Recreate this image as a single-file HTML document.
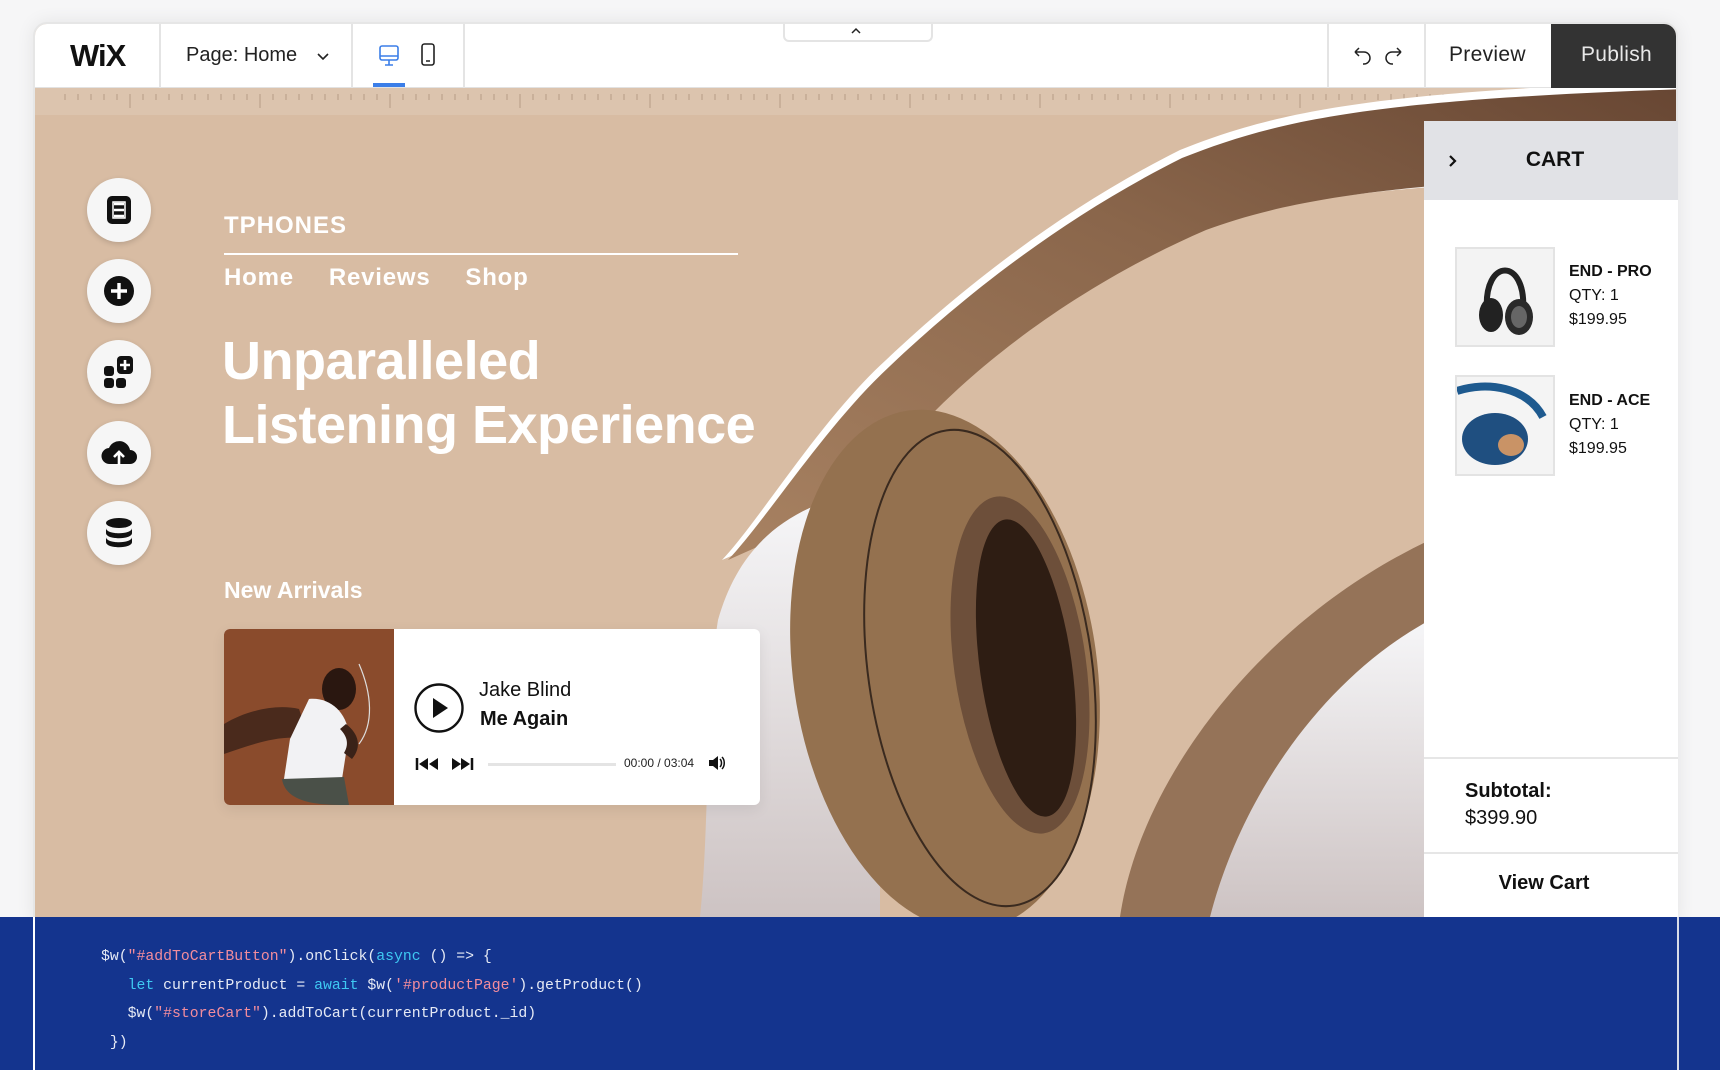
<!DOCTYPE html>
<html><head><meta charset="utf-8"><style>
*{margin:0;padding:0;box-sizing:border-box}
body{width:1720px;height:1070px;overflow:hidden;background:#f6f6f7;font-family:"Liberation Sans",sans-serif;position:relative}
.a{position:absolute}
.frame{left:33px;top:22px;width:1645px;height:900px;background:#d8bca3;border-radius:14px 14px 0 0;overflow:hidden;box-shadow:0 0 18px rgba(0,0,0,.08);border:2px solid #e6e6e6}
.top{left:0;top:0;width:1645px;height:64px;background:#fff;border-bottom:1px solid #e2e2e2}
.sep{top:0;width:2px;height:64px;background:#e4e4e4}
.circ{width:64px;height:64px;border-radius:50%;background:#f6f6f6;box-shadow:0 2px 6px rgba(0,0,0,.15);display:flex;align-items:center;justify-content:center}
.w{color:#fff}
.code{left:0;top:917px;width:1720px;height:153px;background:#14348e}
.code pre{font-family:"Liberation Mono",monospace;font-size:14.8px;color:#e6eaf5;line-height:28.5px;position:absolute;left:101px;top:26px}
.s{color:#f38d9d}.k{color:#3ec8f2}
.cart{left:1424px;top:121px;width:254px;height:796px;background:#fff}
.ct{font-size:16px;color:#111;line-height:24px}
</style></head><body>
<div class="a frame">
 <div class="a" style="left:0;top:64px;width:1645px;height:27px;background:#dcc4ae"></div>
 <svg class="a" style="left:0;top:64px" width="1645" height="27">
  <g stroke="#b69c86" stroke-width="1">
   <path d="M30 6v6M43 6v6M56 6v6M69 6v6M82 6v6M95 6v14M108 6v6M121 6v6M134 6v6M147 6v6M160 6v6M173 6v6M186 6v6M199 6v6M212 6v6M225 6v14M238 6v6M251 6v6M264 6v6M277 6v6M290 6v6M303 6v6M316 6v6M329 6v6M342 6v6M355 6v14M368 6v6M381 6v6M394 6v6M407 6v6M420 6v6M433 6v6M446 6v6M459 6v6M472 6v6M485 6v14M498 6v6M511 6v6M524 6v6M537 6v6M550 6v6M563 6v6M576 6v6M589 6v6M602 6v6M615 6v14M628 6v6M641 6v6M654 6v6M667 6v6M680 6v6M693 6v6M706 6v6M719 6v6M732 6v6M745 6v14M758 6v6M771 6v6M784 6v6M797 6v6M810 6v6M823 6v6M836 6v6M849 6v6M862 6v6M875 6v14M888 6v6M901 6v6M914 6v6M927 6v6M940 6v6M953 6v6M966 6v6M979 6v6M992 6v6M1005 6v14M1018 6v6M1031 6v6M1044 6v6M1057 6v6M1070 6v6M1083 6v6M1096 6v6M1109 6v6M1122 6v6M1135 6v14M1148 6v6M1161 6v6M1174 6v6M1187 6v6M1200 6v6M1213 6v6M1226 6v6M1239 6v6M1252 6v6M1265 6v14M1278 6v6M1291 6v6M1304 6v6M1317 6v6M1330 6v6M1343 6v6M1356 6v6M1369 6v6M1382 6v6M1395 6v14M1408 6v6M1421 6v6M1434 6v6M1447 6v6M1460 6v6M1473 6v6M1486 6v6M1499 6v6M1512 6v6M1525 6v14M1538 6v6M1551 6v6M1564 6v6M1577 6v6M1590 6v6M1603 6v6M1616 6v6"/>
  </g>
 </svg>
 <svg class="a" style="left:-35px;top:-24px" width="1720" height="1070">
  <defs>
   <linearGradient id="band" x1="0" y1="1" x2="1" y2="0"><stop offset="0" stop-color="#a88262"/><stop offset=".55" stop-color="#8a664b"/><stop offset="1" stop-color="#664532"/></linearGradient>
   <linearGradient id="wh" x1="0" y1="0" x2="0" y2="1"><stop offset="0" stop-color="#f6f6f8"/><stop offset="1" stop-color="#cdc3c3"/></linearGradient>
  </defs>
  <path d="M722 560 C760 520 820 420 886 360 C960 290 1060 210 1180 150 C1280 110 1380 90 1720 80 L1720 178 C1400 178 1280 200 1200 230 C1080 280 990 350 933 408 C900 445 880 470 860 500 Z" fill="#fff"/>
  <path d="M728 560 C766 520 826 425 890 366 C964 296 1062 218 1182 158 C1282 118 1382 98 1720 88 L1720 176 C1400 176 1282 202 1206 230 C1086 282 994 352 936 410 C903 447 883 472 862 500 Z" fill="url(#band)"/>
  <path d="M718 620 C735 560 770 520 830 500 L880 560 L880 917 L700 917 C710 820 705 700 718 620 Z" fill="url(#wh)"/>
  <ellipse cx="945" cy="670" rx="152" ry="262" transform="rotate(-8 945 670)" fill="#94714f"/>
  <ellipse cx="980" cy="668" rx="112" ry="240" transform="rotate(-8 980 668)" fill="none" stroke="#3a2a1f" stroke-width="2"/>
  <ellipse cx="1020" cy="665" rx="66" ry="170" transform="rotate(-8 1020 665)" fill="#6d4f3a"/>
  <ellipse cx="1026" cy="668" rx="46" ry="150" transform="rotate(-8 1026 668)" fill="#2e1d13"/>
  <path d="M1120 917 C1140 780 1260 620 1430 540 L1430 917 Z" fill="#957358"/>
  <path d="M1210 917 C1240 800 1320 680 1430 620 L1430 917 Z" fill="url(#wh)"/>
 </svg>
 <div class="a top">
  <div class="a" style="left:35px;top:14px;font-size:31px;font-weight:bold;letter-spacing:-1px;color:#111">WiX</div>
  <div class="a sep" style="left:124px"></div>
  <div class="a" style="left:151px;top:20px;font-size:20px;color:#222">Page: Home</div>
  <svg class="a" style="left:282px;top:29px" width="12" height="8"><path d="M1 1l5 5 5-5" stroke="#222" stroke-width="1.6" fill="none"/></svg>
  <div class="a sep" style="left:316px"></div>
  <svg class="a" style="left:343px;top:20px" width="22" height="24"><rect x="2" y="2" width="18" height="14" rx="2" fill="none" stroke="#3b7ee8" stroke-width="1.6"/><path d="M2 12h18M11 16v5M7 21h8" stroke="#3b7ee8" stroke-width="1.6"/></svg>
  <div class="a" style="left:338px;top:59px;width:32px;height:4px;background:#3b7ee8"></div>
  <svg class="a" style="left:385px;top:18px" width="16" height="26"><rect x="2" y="2" width="12" height="21" rx="2.5" fill="none" stroke="#222" stroke-width="1.6"/><path d="M6 19h4" stroke="#222" stroke-width="1.4"/></svg>
  <div class="a sep" style="left:428px"></div>
  <div class="a" style="left:748px;top:-2px;width:150px;height:20px;border:2px solid #e4e4e4;border-top:none;border-radius:0 0 6px 6px;background:#fff"></div>
  <svg class="a" style="left:815px;top:3px" width="12" height="8"><path d="M2 6l4-4 4 4" stroke="#222" stroke-width="1.5" fill="none"/></svg>
  <div class="a sep" style="left:1292px"></div>
  <svg class="a" style="left:1315px;top:21px" width="56" height="22"><path d="M5 7h9a6 6 0 0 1 0 12h-1M5 7l4-4M5 7l4 4" stroke="#222" stroke-width="1.5" fill="none"/><path d="M51 7h-9a6 6 0 0 0 0 12h1M51 7l-4-4M51 7l-4 4" stroke="#222" stroke-width="1.5" fill="none"/></svg>
  <div class="a sep" style="left:1389px"></div>
  <div class="a" style="left:1414px;top:19px;font-size:21px;color:#222;letter-spacing:.3px">Preview</div>
  <div class="a" style="left:1516px;top:0;width:129px;height:64px;background:#333"></div>
  <div class="a" style="left:1546px;top:19px;font-size:21px;color:#e8e8e8;letter-spacing:.3px">Publish</div>
 </div>
 <div class="a circ" style="left:52px;top:154px"><svg width="28" height="32"><rect x="2" y="2" width="24" height="28" rx="5" fill="#111"/><path d="M9 10h10M9 16h10M9 22h10" stroke="#fff" stroke-width="2.4"/><rect x="8" y="8" width="12" height="16" fill="none" stroke="#fff" stroke-width="1.5"/></svg></div>
 <div class="a circ" style="left:52px;top:235px"><svg width="32" height="32"><circle cx="16" cy="16" r="15" fill="#111"/><path d="M16 8v16M8 16h16" stroke="#fff" stroke-width="3.4"/></svg></div>
 <div class="a circ" style="left:52px;top:316px"><svg width="32" height="32"><rect x="1" y="10" width="10" height="10" rx="3" fill="#111"/><rect x="1" y="22" width="10" height="10" rx="3" fill="#111"/><rect x="13" y="22" width="10" height="10" rx="3" fill="#111"/><rect x="14" y="0" width="16" height="18" rx="4" fill="#111"/><path d="M22 4v10M17 9h10" stroke="#fff" stroke-width="2.6"/></svg></div>
 <div class="a circ" style="left:52px;top:397px"><svg width="36" height="30"><path d="M9 26a8 8 0 0 1-1-16 11 11 0 0 1 21 2 7 7 0 0 1 0 14z" fill="#111"/><path d="M18 27v-12M13 19l5-5 5 5" stroke="#fff" stroke-width="2.6" fill="none"/></svg></div>
 <div class="a circ" style="left:52px;top:477px"><svg width="30" height="32"><ellipse cx="15" cy="6" rx="13" ry="5" fill="#111"/><path d="M2 11c0 7 26 7 26 0v5c0 7-26 7-26 0zM2 20c0 7 26 7 26 0v5c0 7-26 7-26 0z" fill="#111"/></svg></div>
 <div class="a w" style="left:189px;top:188px;font-size:24px;font-weight:bold;letter-spacing:1px">TPHONES</div>
 <div class="a" style="left:189px;top:229px;width:514px;height:2px;background:#fff"></div>
 <div class="a w" style="left:189px;top:240px;font-size:24px;font-weight:bold;letter-spacing:.8px;word-spacing:10px">Home &nbsp;Reviews &nbsp;Shop</div>
 <div class="a w" style="left:187px;top:305px;font-size:54px;font-weight:bold;line-height:64px;letter-spacing:-.5px">Unparalleled<br>Listening Experience</div>
 <div class="a w" style="left:189px;top:553px;font-size:23px;font-weight:bold">New Arrivals</div>
 <div class="a" style="left:189px;top:605px;width:536px;height:176px;background:#fff;border-radius:6px;overflow:hidden;box-shadow:0 4px 14px rgba(0,0,0,.08)">
  <svg class="a" style="left:0;top:0" width="170" height="176">
   <rect width="170" height="176" fill="#8a4b2c"/>
   <path d="M0 95 C25 80 55 75 75 80 L85 110 C55 105 30 115 0 125Z" fill="#4a2a1c"/>
   <ellipse cx="115" cy="60" rx="17" ry="21" fill="#2a1710"/>
   <path d="M85 70 C105 68 122 82 125 105 L118 150 C100 158 75 156 60 150 L66 110 Z" fill="#f2f2f4"/>
   <path d="M58 150 C62 176 100 176 125 176 L120 148 Z" fill="#4a5048"/>
   <path d="M122 95 C135 105 138 118 128 130 L120 124 C126 114 122 106 116 100Z" fill="#3a2218"/>
   <path d="M135 35 C148 65 150 95 135 115" stroke="#ddd" fill="none" stroke-width="1.2"/>
  </svg>
  <svg class="a" style="left:189px;top:53px" width="52" height="52"><circle cx="26" cy="26" r="23.5" fill="none" stroke="#111" stroke-width="2.4"/><path d="M20 16v20l15-10z" fill="#111"/></svg>
  <div class="a" style="left:255px;top:50px;font-size:20px;color:#111">Jake Blind</div>
  <div class="a" style="left:256px;top:79px;font-size:20px;font-weight:bold;color:#111">Me Again</div>
  <svg class="a" style="left:191px;top:128px" width="64" height="14"><path d="M2 1v12" stroke="#111" stroke-width="2.5"/><path d="M13 1L4 7l9 6zM23 1l-9 6 9 6z" fill="#111"/><path d="M37 1l9 6-9 6zM46 1l9 6-9 6z" fill="#111"/><path d="M57 1v12" stroke="#111" stroke-width="2.5"/></svg>
  <div class="a" style="left:264px;top:134px;width:128px;height:3px;background:#e4e4e4"></div>
  <div class="a" style="left:400px;top:127px;font-size:12px;color:#222">00:00 / 03:04</div>
  <svg class="a" style="left:484px;top:126px" width="18" height="16"><path d="M1 5h4l5-4v14l-5-4H1z" fill="#111"/><path d="M12 4c2 2 2 6 0 8M14 2c3 3 3 9 0 12" stroke="#111" stroke-width="1.5" fill="none"/></svg>
 </div>
</div>
<div class="a cart">
 <div class="a" style="left:0;top:0;width:254px;height:79px;background:#e1e2e6"></div>
 <svg class="a" style="left:24px;top:33px" width="10" height="14"><path d="M2 2l5 5-5 5" stroke="#111" stroke-width="2.2" fill="none"/></svg>
 <div class="a" style="left:0;top:27px;width:262px;text-align:center;font-size:21px;font-weight:bold;color:#111">CART</div>
 <div class="a" style="left:31px;top:126px;width:100px;height:100px;border:2px solid #e3e3e3;background:#f3f3f3"></div>
 <svg class="a" style="left:33px;top:128px" width="96" height="96"><path d="M30 62 C26 8 70 8 66 62" stroke="#222" stroke-width="6" fill="none"/><ellipse cx="34" cy="66" rx="12" ry="17" fill="#222"/><ellipse cx="62" cy="68" rx="14" ry="18" fill="#2a2a2a"/><ellipse cx="62" cy="68" rx="8" ry="11" fill="#666"/></svg>
 <div class="a" style="left:31px;top:254px;width:100px;height:101px;border:2px solid #e3e3e3;background:#f4f4f4"></div>
 <svg class="a" style="left:33px;top:256px" width="96" height="97"><path d="M0 14 C30 4 70 10 86 40" stroke="#1e5a8f" stroke-width="8" fill="none"/><ellipse cx="38" cy="62" rx="33" ry="26" fill="#1f4f80"/><ellipse cx="54" cy="68" rx="13" ry="11" fill="#c99366"/></svg>
 <div class="a ct" style="left:145px;top:139px"><b>END - PRO</b><br>QTY: 1<br>$199.95</div>
 <div class="a ct" style="left:145px;top:268px"><b>END - ACE</b><br>QTY: 1<br>$199.95</div>
 <div class="a" style="left:0;top:636px;width:254px;height:2px;background:#e6e6e6"></div>
 <div class="a" style="left:41px;top:657px;font-size:20px;line-height:27px;color:#111"><b>Subtotal:</b><br>$399.90</div>
 <div class="a" style="left:0;top:731px;width:254px;height:2px;background:#e6e6e6"></div>
 <div class="a" style="left:0;top:751px;width:240px;text-align:center;font-size:20px;font-weight:bold;color:#111">View Cart</div>
</div>
<div class="a code">
 <div class="a" style="left:33px;top:0;width:2px;height:153px;background:#fff"></div>
 <div class="a" style="left:1677px;top:0;width:2px;height:153px;background:#d8dce8"></div>
<pre>$w(<span class="s">"#addToCartButton"</span>).onClick(<span class="k">async</span> () =&gt; {
   <span class="k">let</span> currentProduct = <span class="k">await</span> $w(<span class="s">'#productPage'</span>).getProduct()
   $w(<span class="s">"#storeCart"</span>).addToCart(currentProduct._id)
 })</pre>
</div>
</body></html>
